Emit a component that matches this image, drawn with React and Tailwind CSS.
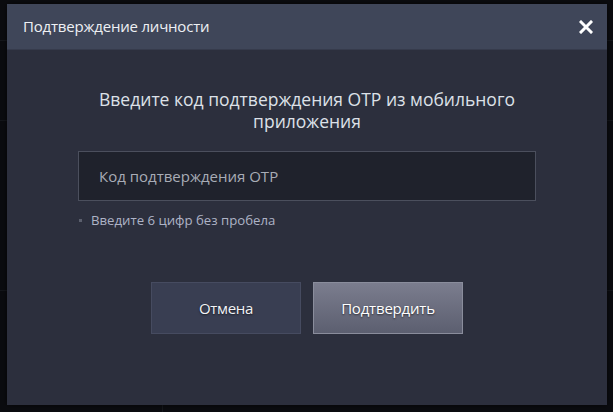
export default function App() {
  return (
    <div className="relative w-[613px] h-[412px] bg-[#0b0c10] overflow-hidden" style={{ fontFamily: '"Open Sans", "Noto Sans", sans-serif' }}>
      {/* faint background chart lines */}
      <div className="absolute left-0 right-0 top-[40px] h-px bg-[#15171c]" />
      <div className="absolute left-0 right-0 top-[120px] h-px bg-[#14161b]" />
      <div className="absolute left-0 right-0 top-[290px] h-px bg-[#14161b]" />
      <div className="absolute top-[300px] bottom-0 left-[162px] w-px bg-[#15171c]" />
      <div className="absolute left-[7px] top-[4px] w-[600px] h-[401px] flex flex-col bg-[#2c2f3d] shadow-[0_0_6px_rgba(0,0,0,0.6)]">
        <div className="h-[46px] shrink-0 bg-[#3f4659] flex items-center justify-between pl-[16px] pr-[14px] border-b border-[#363b4c]">
          <span className="text-[15px] text-[#eef0f4] tracking-[-0.2px]">Подтверждение личности</span>
          <svg width="14" height="14" viewBox="0 0 14 14">
            <path d="M2 2 L12 12 M12 2 L2 12" stroke="#ffffff" strokeWidth="3" strokeLinecap="square" />
          </svg>
        </div>
        <div className="flex flex-col items-center pt-[38px]">
          <p className="text-[17.5px] leading-[22px] text-[#dde1e8] text-center w-[440px]">
            Введите код подтверждения OTP из мобильного приложения
          </p>
          <div className="mt-[19px] w-[458px] h-[50px] bg-[#1f222c] border border-[#4b4f5d] flex items-center pl-[20px]">
            <span className="text-[15px] text-[#a8acb6]">Код подтверждения OTP</span>
          </div>
          <div className="w-[458px] h-[18px] mt-[10px] flex items-center pl-[1px]">
            <span className="w-[3px] h-[3px] bg-[#5b5f6d] mr-[9px]" />
            <span className="text-[13.2px] leading-[18px] text-[#aeb3c6]">Введите 6 цифр без пробела</span>
          </div>
          <div className="mt-[53px] flex gap-[12px]">
            <div className="w-[150px] h-[52px] bg-[#393e52] border border-[#464b60] flex items-center justify-center">
              <span className="text-[15px] text-[#f2f3f6] tracking-[-0.3px] [text-shadow:0_1px_2px_rgba(0,0,0,0.6)]">Отмена</span>
            </div>
            <div className="w-[150px] h-[52px] bg-gradient-to-b from-[#7b7d8e] to-[#5c5f70] border border-[#8a8d9c] flex items-center justify-center">
              <span className="text-[15px] text-[#ffffff] tracking-[-0.2px] [text-shadow:0_1px_2px_rgba(0,0,0,0.6)]">Подтвердить</span>
            </div>
          </div>
        </div>
      </div>
    </div>
  );
}
